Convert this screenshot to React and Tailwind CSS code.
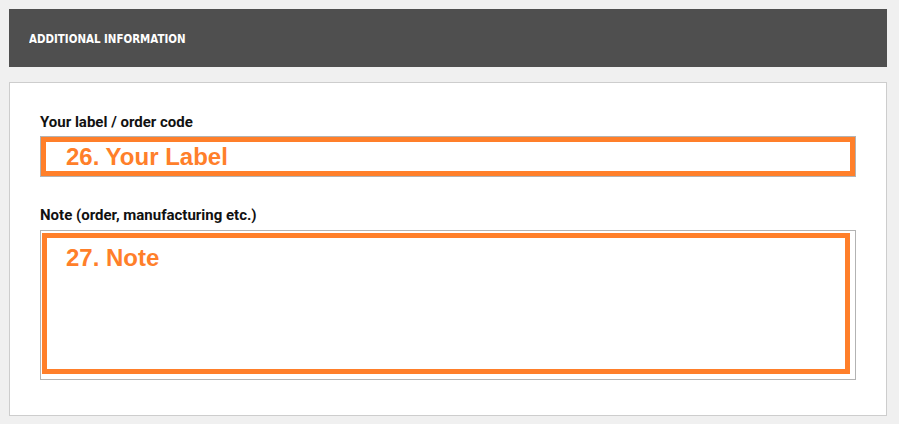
export default function App() {
  return (
    <div className="min-h-[424px] w-full bg-[#f0f0f0] pt-[9px] pl-[9px] pr-[12px] pb-[8px]">
      <div className="flex h-[58px] items-center bg-[#4f4f4f] pl-[20px]">
        <span className="inline-block origin-left scale-x-[0.79] text-[13px] font-bold uppercase leading-none whitespace-nowrap text-white [font-family:'DejaVu_Sans',sans-serif]">
          Additional Information
        </span>
      </div>
      <div className="mt-[15px] border border-[#cdcdcd] bg-white px-[30px] pt-[30px] pb-[35px] [font-family:Roboto,'Liberation_Sans',sans-serif]">
        <div className="mb-[5px] text-[15px] font-bold leading-[18px] text-[#111]">Your label / order code</div>
        <div className="h-[41px] border border-[#b3b3b3] bg-white">
          <div className="h-full border-[5px] border-[#ff7f2a] pl-[20px] text-[24px] font-bold leading-[29px] text-[#ff7f2a] [font-family:Arial,'Liberation_Sans',sans-serif]">
            26. Your Label
          </div>
        </div>
        <div className="mt-[29px] mb-[6px] text-[15px] font-bold leading-[18px] text-[#111]">Note (order, manufacturing etc.)</div>
        <div className="h-[150px] border border-[#b3b3b3] bg-white pt-[2px] pr-[5px] pb-[5px] pl-[1px]">
          <div className="h-full border-[5px] border-[#ff7f2a] pt-[5px] pl-[19px] text-[24px] font-bold leading-[30px] text-[#ff7f2a] [font-family:Arial,'Liberation_Sans',sans-serif]">
            27. Note
          </div>
        </div>
      </div>
    </div>
  );
}
